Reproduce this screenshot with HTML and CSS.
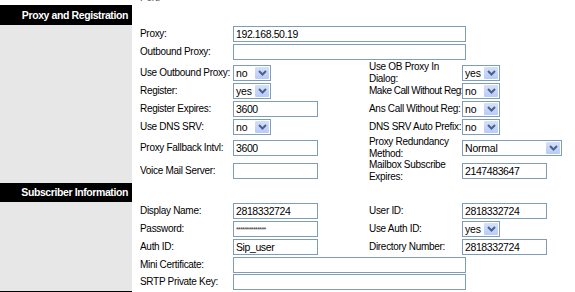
FILE: index.html
```html
<!DOCTYPE html>
<html lang="en">
<head>
  <meta charset="UTF-8" />
  <title>SIP Line Settings</title>
  <link rel="stylesheet" href="styles.css">
</head>
<body>
  <div class="cut"><span>Port:</span></div>

  <section class="group">
    <h2 class="group-title">Proxy and Registration</h2>
    <div class="group-body">
      <div class="side"></div>
      <div class="fields">
        <div class="row">
          <span class="label">Proxy:</span>
          <div class="span3"><input class="wide" type="text" value="192.168.50.19"></div>
        </div>
        <div class="row">
          <span class="label">Outbound Proxy:</span>
          <div class="span3"><input class="wide" type="text" value=""></div>
        </div>
        <div class="row tall">
          <span class="label">Use Outbound Proxy:</span>
          <div><div class="select"><span>no</span><i class="btn"><svg width="9" height="6" viewBox="0 0 9 6"><polyline points="1,1 4.5,4.5 8,1" /></svg></i></div></div>
          <span class="label">Use OB Proxy In<br>Dialog:</span>
          <div><div class="select"><span>yes</span><i class="btn"><svg width="9" height="6" viewBox="0 0 9 6"><polyline points="1,1 4.5,4.5 8,1" /></svg></i></div></div>
        </div>
        <div class="row">
          <span class="label">Register:</span>
          <div><div class="select"><span>yes</span><i class="btn"><svg width="9" height="6" viewBox="0 0 9 6"><polyline points="1,1 4.5,4.5 8,1" /></svg></i></div></div>
          <span class="label tight">Make Call Without Reg:</span>
          <div><div class="select"><span>no</span><i class="btn"><svg width="9" height="6" viewBox="0 0 9 6"><polyline points="1,1 4.5,4.5 8,1" /></svg></i></div></div>
        </div>
        <div class="row">
          <span class="label">Register Expires:</span>
          <div><input type="text" value="3600"></div>
          <span class="label">Ans Call Without Reg:</span>
          <div><div class="select"><span>no</span><i class="btn"><svg width="9" height="6" viewBox="0 0 9 6"><polyline points="1,1 4.5,4.5 8,1" /></svg></i></div></div>
        </div>
        <div class="row">
          <span class="label">Use DNS SRV:</span>
          <div><div class="select"><span>no</span><i class="btn"><svg width="9" height="6" viewBox="0 0 9 6"><polyline points="1,1 4.5,4.5 8,1" /></svg></i></div></div>
          <span class="label">DNS SRV Auto Prefix:</span>
          <div><div class="select"><span>no</span><i class="btn"><svg width="9" height="6" viewBox="0 0 9 6"><polyline points="1,1 4.5,4.5 8,1" /></svg></i></div></div>
        </div>
        <div class="row taller">
          <span class="label">Proxy Fallback Intvl:</span>
          <div><input type="text" value="3600"></div>
          <span class="label">Proxy Redundancy<br>Method:</span>
          <div><div class="select long"><span>Normal</span><i class="btn"><svg width="9" height="6" viewBox="0 0 9 6"><polyline points="1,1 4.5,4.5 8,1" /></svg></i></div></div>
        </div>
        <div class="row taller">
          <span class="label">Voice Mail Server:</span>
          <div><input type="text" value=""></div>
          <span class="label">Mailbox Subscribe<br>Expires:</span>
          <div><input type="text" value="2147483647"></div>
        </div>
      </div>
    </div>
  </section>

  <section class="group">
    <h2 class="group-title short">Subscriber Information</h2>
    <div class="group-body">
      <div class="side"></div>
      <div class="fields">
        <div class="row">
          <span class="label">Display Name:</span>
          <div><input type="text" value="2818332724"></div>
          <span class="label">User ID:</span>
          <div><input type="text" value="2818332724"></div>
        </div>
        <div class="row">
          <span class="label">Password:</span>
          <div><input class="secret" type="text" value="**************"></div>
          <span class="label">Use Auth ID:</span>
          <div><div class="select"><span>yes</span><i class="btn"><svg width="9" height="6" viewBox="0 0 9 6"><polyline points="1,1 4.5,4.5 8,1" /></svg></i></div></div>
        </div>
        <div class="row">
          <span class="label">Auth ID:</span>
          <div><input type="text" value="Sip_user"></div>
          <span class="label">Directory Number:</span>
          <div><input type="text" value="2818332724"></div>
        </div>
        <div class="row short">
          <span class="label">Mini Certificate:</span>
          <div class="span3"><input class="wide" type="text" value=""></div>
        </div>
        <div class="row short">
          <span class="label">SRTP Private Key:</span>
          <div class="span3"><input class="wide" type="text" value=""></div>
        </div>
      </div>
    </div>
  </section>

  <div class="next-title"></div>
</body>
</html>
```

FILE: styles.css
```css
body {
  margin: 0;
  font-family: 'Liberation Sans', Arial, sans-serif;
  font-size: 10px;
  letter-spacing: -0.2px;
  color: #000;
  background-color: #fff;
}

.cut {
  height: 5px;
  overflow: hidden;
  padding-left: 140px;
}

.cut span {
  display: block;
  margin-top: -8px;
  line-height: 12px;
  color: #555;
}

.group-title {
  margin: 0;
  width: 132px;
  height: 20px;
  box-sizing: border-box;
  padding-right: 4px;
  background-color: #000;
  color: #fff;
  font-size: 10.5px;
  font-weight: bold;
  letter-spacing: -0.4px;
  line-height: 20px;
  text-align: right;
  white-space: nowrap;
}

.group-title.short {
  height: 19px;
  line-height: 19px;
}

.group-body {
  display: grid;
  grid-template-columns: 132px 1fr;
}

.side {
  background-color: #e7e7e7;
}

.fields {
  padding-left: 8px;
  padding-bottom: 1px;
}

.row {
  display: grid;
  grid-template-columns: 93px 136px 93px 1fr;
  align-items: center;
  height: 18px;
}

.row.short {
  height: 17px;
}

.row.tall {
  height: 21px;
}

.row.taller {
  height: 23px;
}

.label {
  line-height: 12px;
  letter-spacing: -0.3px;
  white-space: nowrap;
}

.label.tight {
  letter-spacing: -0.5px;
}

.span3 {
  grid-column: 2 / 5;
}

input {
  display: block;
  width: 85px;
  height: 16px;
  box-sizing: border-box;
  margin: 0;
  padding: 0 2px;
  border: 1px solid #7f9db9;
  background-color: #fff;
  font-family: inherit;
  font-size: 10.5px;
  letter-spacing: -0.4px;
  color: #000;
}

input.wide {
  width: 233px;
}

input.secret {
  font-size: 7px;
  letter-spacing: -0.6px;
  color: #333;
}

.select {
  display: flex;
  width: 38px;
  height: 16px;
  box-sizing: border-box;
  border: 1px solid #7f9db9;
  background-color: #fff;
}

.select.long {
  width: 100px;
}

.select span {
  flex: 1;
  padding-left: 2px;
  line-height: 14px;
  font-size: 10.5px;
}

.select .btn {
  display: flex;
  align-items: center;
  justify-content: center;
  width: 14px;
  height: 12px;
  margin: 1px;
  border-radius: 1px;
  background: linear-gradient(#d4e1fd, #b8cbf7);
}

.select .btn polyline {
  fill: none;
  stroke: #4d6185;
  stroke-width: 2;
}

.next-title {
  width: 132px;
  height: 20px;
  background-color: #000;
}
```
